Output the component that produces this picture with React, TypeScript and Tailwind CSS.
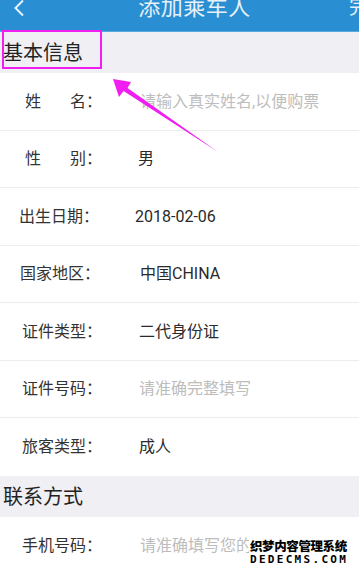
import React from 'react';

type Row = {
  label: React.ReactNode;
  value: string;
  placeholder?: boolean;
  labelPad: string;
  valuePad: string;
  height: string;
  valueWidth?: string;
};

const rows: Row[] = [
  {
    label: (
      <span className="flex">
        <span>姓</span>
        <span className="ml-[29px]">名</span>
        <span>：</span>
      </span>
    ),
    value: '请输入真实姓名,以便购票',
    placeholder: true,
    labelPad: 'pl-[25px]',
    valuePad: 'pl-[38px]',
    height: 'h-[58px]',
  },
  {
    label: (
      <span className="flex">
        <span>性</span>
        <span className="ml-[29px]">别</span>
        <span>：</span>
      </span>
    ),
    value: '男',
    labelPad: 'pl-[25px]',
    valuePad: 'pl-[36px]',
    height: 'h-[57px]',
  },
  { label: '出生日期：', value: '2018-02-06', labelPad: 'pl-[19px]', valuePad: 'pl-[36px]', height: 'h-[58px]' },
  { label: '国家地区：', value: '中国CHINA', labelPad: 'pl-[20px]', valuePad: 'pl-[40px]', height: 'h-[57px]' },
  { label: '证件类型：', value: '二代身份证', labelPad: 'pl-[22px]', valuePad: 'pl-[37px]', height: 'h-[58px]' },
  { label: '证件号码：', value: '请准确完整填写', placeholder: true, labelPad: 'pl-[22px]', valuePad: 'pl-[37px]', height: 'h-[57px]' },
  { label: '旅客类型：', value: '成人', labelPad: 'pl-[22px]', valuePad: 'pl-[37px]', height: 'h-[58px]' },
];

const FormRow: React.FC<{ row: Row; last?: boolean }> = ({ row, last }) => (
  <div
    className={`flex items-center bg-white ${row.height} ${row.labelPad} ${last ? '' : 'border-b border-[#ececec]'}`}
  >
    <div className="text-[16px] text-[#333333] whitespace-nowrap">{row.label}</div>
    <div className={`${row.valuePad} ${row.valueWidth ?? ''} shrink-0 overflow-hidden`}>
      <div className={`text-[16px] whitespace-nowrap ${row.placeholder ? 'text-[#bdbdbd]' : 'text-[#2a2a2a]'}`}>
        {row.value}
      </div>
    </div>
  </div>
);

const SectionTitle: React.FC<{ text: string }> = ({ text }) => (
  <div className="h-[41px] bg-[#efeff4] flex items-center pl-[3px] text-[20px] text-[#222222]">{text}</div>
);

export default function App() {
  return (
    <div
      className="relative w-[359px] h-[573px] overflow-hidden bg-white"
      style={{ fontFamily: 'Roboto, "Noto Sans CJK SC", sans-serif' }}
    >
      {/* header, top part cropped off */}
      <div className="h-[32px] overflow-hidden bg-[#2a8fd2] border-b border-[#5aaae0]">
        <div className="relative h-[48px] -mt-[17px] flex items-center justify-center">
          <svg className="absolute left-[12px] top-[16px]" width="14" height="18" viewBox="0 0 14 18">
            <path d="M11 1.5 L3.5 9 L11 16.5" fill="none" stroke="#e8f2fb" strokeWidth="2" />
          </svg>
          <span className="ml-[30px] text-[22px] text-[#e6f0fa] tracking-[0.5px]">添加乘车人</span>
          <span className="absolute left-[349px] text-[20px] text-[#e6f0fa]">完</span>
        </div>
      </div>

      <SectionTitle text="基本信息" />
      {rows.map((r, i) => (
        <FormRow key={i} row={r} last={i === rows.length - 1} />
      ))}
      <SectionTitle text="联系方式" />
      <FormRow
        row={{
          label: '手机号码：',
          value: '请准确填写您的手机号码',
          placeholder: true,
          labelPad: 'pl-[22px]',
          valuePad: 'pl-[38px]',
          height: 'h-[58px]',
          valueWidth: 'w-[148px]',
        }}
        last
      />

      {/* annotation: highlight box + arrow */}
      <div className="absolute left-[2px] top-[30px] w-[100px] h-[39px] border-[2.5px] border-[#f01ef0]" />
      <svg className="absolute left-0 top-0 pointer-events-none" width="359" height="573">
        <polygon points="113,79 131,82 127.5,88 218,152 123.5,91 119,97" fill="#f01ef0" />
      </svg>

      {/* watermark */}
      <div className="absolute left-[249px] top-[537px] bg-white px-[1px]">
        <div
          className="h-[17px] leading-[17px] text-[12.5px] font-black text-black tracking-[-0.4px]"
          style={{ fontFamily: '"Noto Sans CJK SC", sans-serif' }}
        >
          织梦内容管理系统
        </div>
        <div
          className="h-[12px] leading-[12px] text-[11px] font-bold text-black tracking-[2.3px]"
          style={{ fontFamily: '"DejaVu Sans Mono", monospace' }}
        >
          DEDECMS.COM
        </div>
      </div>
    </div>
  );
}
